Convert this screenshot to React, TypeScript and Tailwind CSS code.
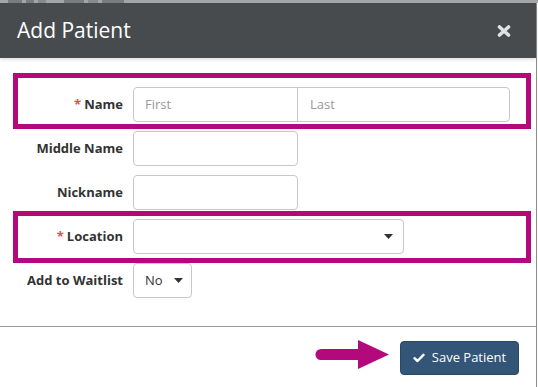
export default function App() {
  const label = "w-[123px] shrink-0 text-right text-[13px] font-bold text-[#333]"
  const input = "h-[35px] rounded-[4px] border border-[#c8c8c8] bg-white"

  return (
    <main className="relative h-[387px] w-[538px] overflow-hidden bg-white font-['Open_Sans',sans-serif]">
      {/* backdrop strip */}
      <div className="flex h-[3px] w-full gap-[4px] bg-[#a5a5a5]">
        <span className="ml-[8px] w-[14px] bg-[#7c7c7c]" />
        <span className="w-[8px] bg-[#7c7c7c]" />
        <span className="w-[8px] bg-[#8a8a8a]" />
        <span className="ml-[14px] w-[20px] bg-[#7c7c7c]" />
        <span className="w-[10px] bg-[#8a8a8a]" />
        <span className="w-[22px] bg-[#7c7c7c]" />
      </div>

      <div className="flex h-[384px] w-[537px] flex-col border-r border-[#8d8d8d]">
        <header className="flex h-[55px] items-center justify-between bg-[#474b4d] pl-[17px] pr-[25px] shadow-[0_2px_3px_rgba(0,0,0,0.12)]">
          <h1 className="text-[21px] leading-none text-white">Add Patient</h1>
          <svg width="14" height="12" viewBox="0 0 14 12">
            <path d="M2.5 2 L11.5 10 M11.5 2 L2.5 10" stroke="#e2e2e2" strokeWidth="3.6" strokeLinecap="round" />
          </svg>
        </header>

        <section className="flex h-[268px] flex-col gap-[9px] pt-[29px]">
          <div className="flex items-center gap-[10px]">
            <label className={label}>
              <span className="mr-[3px] text-[#d9534f]">*</span>Name
            </label>
            <div className="flex h-[35px] w-[377px] rounded-[4px] border border-[#c8c8c8] text-[13px] text-[#999]">
              <div className="flex w-[164px] items-center border-r border-[#c8c8c8] pl-[11px]">First</div>
              <div className="flex flex-1 items-center pl-[12px]">Last</div>
            </div>
          </div>

          <div className="flex items-center gap-[10px]">
            <label className={label}>Middle Name</label>
            <div className={`${input} w-[165px]`} />
          </div>

          <div className="flex items-center gap-[10px]">
            <label className={label}>Nickname</label>
            <div className={`${input} w-[165px]`} />
          </div>

          <div className="flex items-center gap-[10px]">
            <label className={label}>
              <span className="mr-[3px] text-[#d9534f]">*</span>Location
            </label>
            <div className={`${input} flex w-[271px] items-center justify-end pr-[10px]`}>
              <Caret />
            </div>
          </div>

          <div className="flex items-center gap-[10px]">
            <label className={label}>Add to Waitlist</label>
            <div className={`${input} flex w-[59px] items-center justify-between pl-[11px] pr-[8px] text-[13px] text-[#333]`}>
              No
              <Caret />
            </div>
          </div>
        </section>

        <footer className="flex flex-1 items-start justify-end border-t border-[#9a9a9a] pr-[17px] pt-[14px]">
          <button className="flex h-[34px] w-[119px] items-center justify-center gap-[7px] rounded-[4px] border border-[#284866] bg-[#325578] text-[13px] text-white">
            <svg width="12" height="10" viewBox="0 0 12 10">
              <path d="M1.5 5.2 L4.5 8 L10.5 1.8" fill="none" stroke="white" strokeWidth="2.4" strokeLinecap="round" strokeLinejoin="round" />
            </svg>
            Save Patient
          </button>
        </footer>
      </div>

      {/* annotation boxes */}
      <div className="absolute left-[13px] top-[73px] h-[56px] w-[518px] border-[5px] border-[#b3097c]" />
      <div className="absolute left-[13px] top-[211px] h-[52px] w-[518px] border-[5px] border-[#b3097c]" />

      {/* annotation arrow */}
      <svg className="absolute left-[314px] top-[339px]" width="76" height="31" viewBox="0 0 76 31">
        <path d="M7 15.5 H48" stroke="#b3097c" strokeWidth="11" strokeLinecap="round" />
        <path d="M44 1 L75 15.5 L44 30 Z" fill="#b3097c" />
      </svg>
    </main>
  )
}

function Caret() {
  return (
    <svg width="9" height="5" viewBox="0 0 9 5">
      <path d="M0 0 H9 L4.5 5 Z" fill="#333" />
    </svg>
  )
}
